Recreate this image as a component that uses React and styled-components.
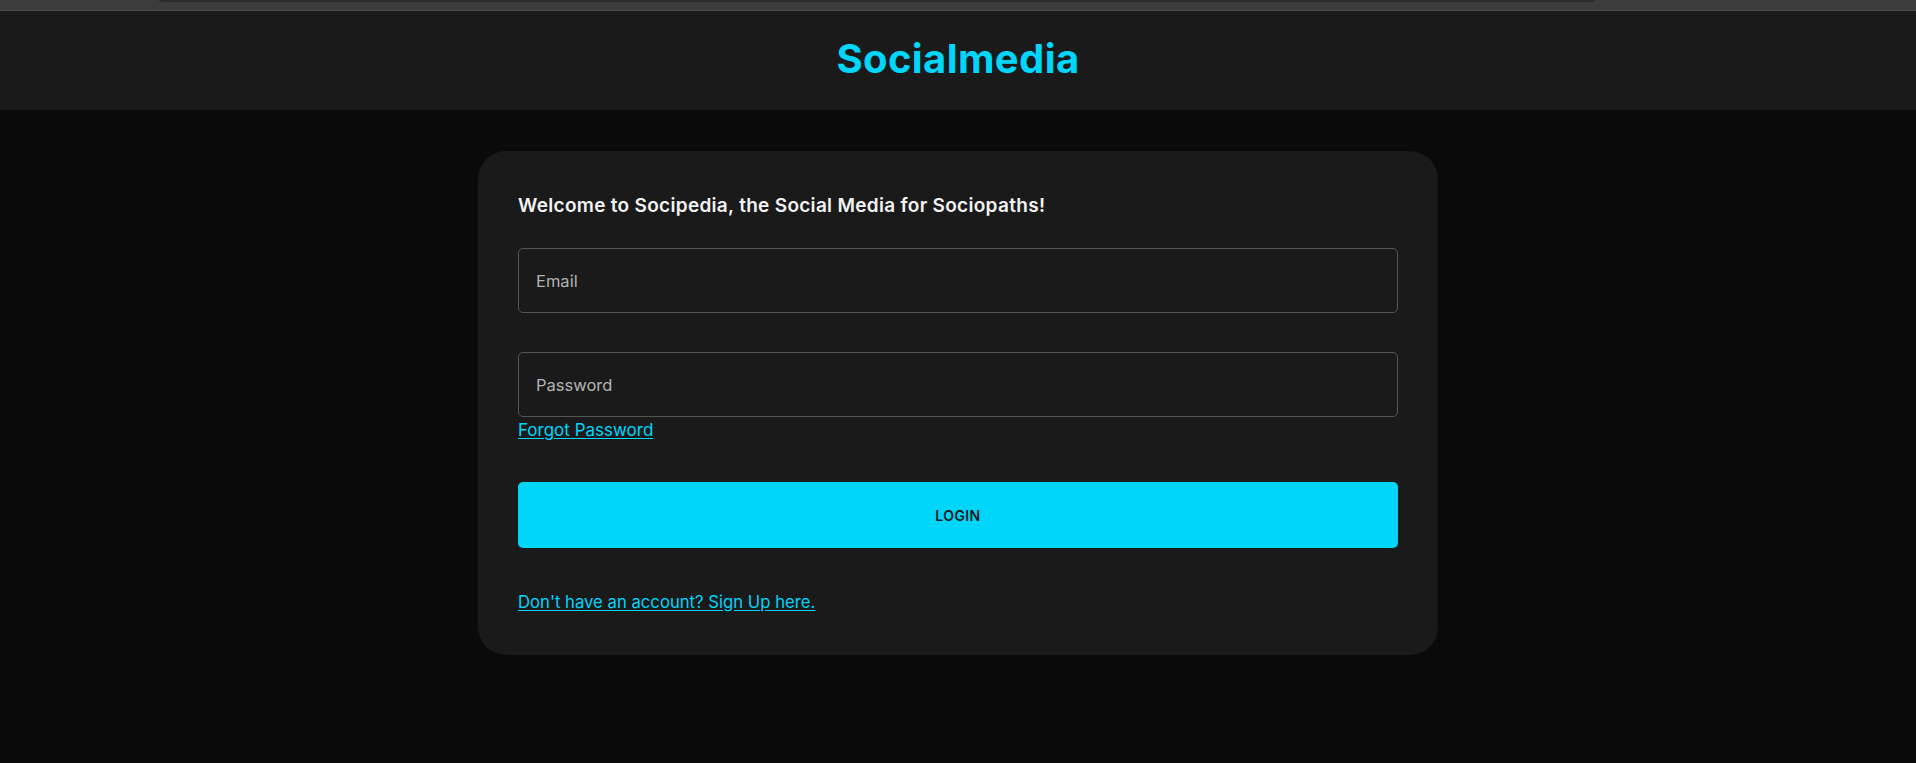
import styled, { createGlobalStyle } from "styled-components";

const GlobalStyle = createGlobalStyle`
  html, body {
    margin: 0;
    padding: 0;
    background: #0a0a0a;
    font-family: "Inter", "Noto Sans", sans-serif;
  }
`;

const BrowserStrip = styled.div`
  height: 10px;
  background: #3c3c3c;
  border-bottom: 1px solid #4b4b4b;
  .scroll {
    height: 2px;
    margin: 0 321px 0 159px;
    background: #2c2c2c;
    border-radius: 0 0 3px 3px;
  }
`;

const Navbar = styled.header`
  height: 99px;
  background: #1a1a1a;
  display: flex;
  align-items: center;
  justify-content: center;
`;

const Logo = styled.div`
  color: #00d5fa;
  font-size: 40px;
  font-weight: 700;
  letter-spacing: 0.4px;
  padding-bottom: 4px;
`;

const Card = styled.main`
  width: 880px;
  margin: 41px auto 0;
  padding: 40px;
  height: 424px;
  background: #1a1a1a;
  border-radius: 28px;
  display: flex;
  flex-direction: column;
`;

const Welcome = styled.h5`
  margin: 0 0 30px;
  color: #f2f2f2;
  font-size: 19px;
  font-weight: 600;
  letter-spacing: 0.3px;
  line-height: 24px;
  padding-top: 3px;
`;

const Field = styled.div`
  height: 63px;
  border: 1px solid #565656;
  border-radius: 5px;
  display: flex;
  align-items: center;
  padding-left: 17px;
  margin-bottom: ${(p) => p.$gap || 0}px;
  color: #b3b3b3;
  font-size: 16.5px;
`;

const TextLink = styled.a`
  align-self: flex-start;
  color: #00d5fa;
  font-size: ${(p) => p.$size || 15}px;
  line-height: 20px;
  text-decoration: underline;
  text-underline-offset: 2px;
  cursor: pointer;
  margin-top: ${(p) => p.$top || 0}px;
`;

const LoginButton = styled.button`
  margin-top: 42px;
  height: 66px;
  border: none;
  border-radius: 5px;
  background: #00d5fa;
  color: #1a1a1a;
  font-family: inherit;
  font-size: 14px;
  font-weight: 600;
  letter-spacing: 0.4px;
  cursor: pointer;
`;

export default function App() {
  return (
    <>
      <GlobalStyle />
      <BrowserStrip>
        <div className="scroll" />
      </BrowserStrip>
      <Navbar>
        <Logo>Socialmedia</Logo>
      </Navbar>
      <Card>
        <Welcome>Welcome to Socipedia, the Social Media for Sociopaths!</Welcome>
        <Field $gap={39}>Email</Field>
        <Field>Password</Field>
        <TextLink $size={17} $top={3}>Forgot Password</TextLink>
        <LoginButton>LOGIN</LoginButton>
        <TextLink $size={16.7} $top={44}>Don't have an account? Sign Up here.</TextLink>
      </Card>
    </>
  );
}
